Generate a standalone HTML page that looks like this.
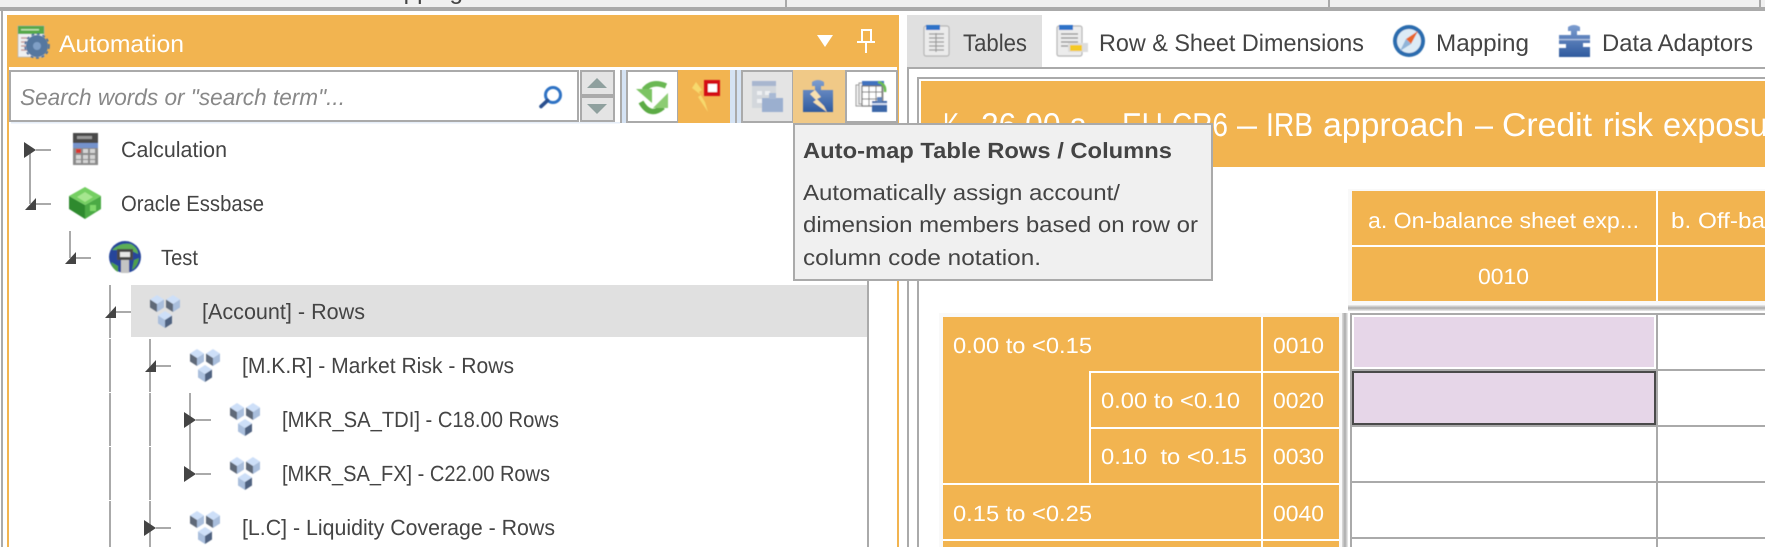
<!DOCTYPE html>
<html lang="en">
<head>
<meta charset="utf-8">
<title>Automation</title>
<style>
html,body{margin:0;padding:0;background:#fff;width:1765px;height:547px;overflow:hidden}
svg{display:block;position:absolute;left:0;top:0}
text{font-family:"Liberation Sans",sans-serif;text-rendering:geometricPrecision}
.t{font-size:22px;fill:#444}
.w{font-size:22px;fill:#fff}
.tab{font-size:24px;fill:#444}
.tip{font-size:22px;fill:#444}
.ttl{font-size:33px;fill:#fff}
</style>
</head>
<body>
<svg xmlns="http://www.w3.org/2000/svg" width="1765" height="547" viewBox="0 0 1765 547">
<defs>
<filter id="b" x="-20%" y="-20%" width="140%" height="140%"><feGaussianBlur stdDeviation="0.6"/></filter>
<linearGradient id="pz" x1="0" y1="0" x2="0" y2="1"><stop offset="0" stop-color="#7d9dd0"/><stop offset="1" stop-color="#2f5a9e"/></linearGradient>
<linearGradient id="sh" x1="0" y1="0" x2="1" y2="0"><stop offset="0" stop-color="#ddd"/><stop offset=".5" stop-color="#aaa"/><stop offset="1" stop-color="#eee"/></linearGradient>
<linearGradient id="shv" x1="0" y1="0" x2="0" y2="1"><stop offset="0" stop-color="#eee"/><stop offset=".5" stop-color="#aaa"/><stop offset="1" stop-color="#eee"/></linearGradient>
<g id="cube1">
<polygon points="0,4.5 7,0 14,4.5 7,9" fill="#cddff8"/>
<polygon points="0,4.5 7,9 7,17 0,12.5" fill="#5f6978"/>
<polygon points="14,4.5 7,9 7,17 14,12.5" fill="#a9bedc"/>
</g>
<g id="cube2">
<polygon points="0,4.5 7,0 14,4.5 7,9" fill="#cddff8"/>
<polygon points="0,4.5 7,9 7,17 0,12.5" fill="#a9bedc"/>
<polygon points="14,4.5 7,9 7,17 14,12.5" fill="#4f6280"/>
</g>
<g id="cubes" filter="url(#b)">
<use href="#cube1" x="0" y="0"/>
<use href="#cube1" x="16" y="0"/>
<use href="#cube2" x="8" y="16"/>
</g>
</defs>

<!-- top window strip -->
<rect x="0" y="0" width="1765" height="7" fill="#f0f0f0"/>
<rect x="0" y="7" width="1765" height="4" fill="#aaa"/>
<rect x="785" y="0" width="2" height="7" fill="#aaa"/>
<rect x="1328" y="0" width="2" height="7" fill="#aaa"/>
<rect x="1759" y="0" width="2" height="7" fill="#aaa"/>
<text class="tab" x="370" y="-1" textLength="93" lengthAdjust="spacingAndGlyphs">Mapping</text>

<!-- left panel frame -->
<rect x="1" y="11" width="2" height="536" fill="#aaa"/>
<rect x="7" y="15" width="2" height="532" fill="#f2b450"/>
<rect x="897" y="15" width="2" height="532" fill="#f2b450"/>
<rect x="7" y="15" width="892" height="52" fill="#f2b450"/>

<!-- header icon -->
<g filter="url(#b)">
<rect x="18" y="26" width="26" height="31" fill="#eef0f2" stroke="#b8b8b8" stroke-width=".8"/>
<rect x="18" y="26" width="26" height="8" fill="#55a848"/>
<rect x="21" y="29" width="18" height="1.5" fill="#bfe3b0"/>
<path d="M21 38h8M21 42h6M21 46h6M21 50h6" stroke="#c49a9a" stroke-width="1.5"/>
<circle cx="37" cy="46" r="11" fill="#55779f"/>
<circle cx="37" cy="46" r="12" fill="none" stroke="#4a6f9f" stroke-width="1.6" stroke-dasharray="3 2.6"/>
<circle cx="37" cy="46" r="4" fill="#7f9fc6"/>
</g>
<text x="59" y="52" font-size="24" fill="#fff" textLength="125" lengthAdjust="spacingAndGlyphs">Automation</text>
<polygon points="817,35 833,35 825,47" fill="#fff"/>
<!-- pin -->
<rect x="862" y="30" width="9" height="12" fill="none" stroke="#fff" stroke-width="2"/>
<rect x="857" y="41" width="18" height="2" fill="#fff"/>
<rect x="865" y="43" width="2" height="10" fill="#fff"/>

<!-- toolbar -->
<rect x="11" y="122" width="609" height="1.5" fill="#e6eef8"/>
<rect x="9" y="70" width="570" height="52" fill="#fff" stroke="none"/>
<path d="M10 71H578V121H10Z" fill="#fff" stroke="#aaa" stroke-width="2"/>
<text x="20" y="105" font-size="23" font-style="italic" fill="#888" textLength="325" lengthAdjust="spacingAndGlyphs">Search words or "search term"...</text>
<g filter="url(#b)">
<circle cx="553" cy="95" r="7.5" fill="none" stroke="#2f72c4" stroke-width="3"/>
<line x1="547.5" y1="100.5" x2="541" y2="106.5" stroke="#2b4f8e" stroke-width="3.6" stroke-linecap="round"/>
</g>
<rect x="581" y="71" width="33" height="24" fill="#e4e4e4" stroke="#aaa" stroke-width="2"/>
<rect x="581" y="97" width="33" height="24" fill="#e4e4e4" stroke="#aaa" stroke-width="2"/>
<polygon points="587,88 607,88 597,78" fill="#8fa09e"/>
<polygon points="587,104 607,104 597,114" fill="#8fa09e"/>

<rect x="620" y="70" width="2" height="53" fill="#aaa"/>
<rect x="622" y="70" width="4" height="53" fill="#d5e3f4"/>
<rect x="627" y="71" width="51" height="51" fill="#fff" stroke="#aaa" stroke-width="2"/>
<g filter="url(#b)">
<path d="M644 90Q652 80 666 86" fill="none" stroke="#6ab852" stroke-width="5.5"/>
<polygon points="636,89 652,89 652,103" fill="#7cc464"/>
<path d="M641 102Q650 118 663 107" fill="none" stroke="#5bab45" stroke-width="5.5"/>
<polygon points="668,108 653,108 668,93" fill="#8ccc72"/>
</g>

<rect x="678" y="70" width="52" height="53" fill="#f2b450"/>
<g filter="url(#b)">
<polygon points="696,82 702,90 699,92 705,102 708,112 698,97 701,95 692,88" fill="#f7dd70" opacity=".9"/>
<rect x="704" y="80" width="16" height="16" fill="#d40f14"/>
<rect x="708" y="84" width="9" height="8" fill="#fff"/>
</g>

<rect x="730" y="70" width="5" height="53" fill="#d5e3f4"/>
<rect x="735" y="70" width="2" height="53" fill="#aaa"/>
<rect x="737" y="70" width="4" height="53" fill="#d5e3f4"/>

<rect x="742" y="71" width="51" height="51" fill="#e4e4e4" stroke="#aaa" stroke-width="2"/>
<g filter="url(#b)">
<rect x="752" y="81" width="24" height="27" fill="#d3d7dc"/>
<rect x="752" y="81" width="24" height="5" fill="#a8b6cf"/>
<path d="M757 91h5v4h-5zM765 91h5v4h-5zM757 99h5v4h-5z" fill="#eef0f2"/>
<rect x="762" y="98" width="21" height="14" fill="#9bafcf"/>
<rect x="769" y="93" width="7" height="6" fill="#a8b9d4"/>
</g>

<rect x="793" y="70" width="52" height="53" fill="#f0c987"/>
<g filter="url(#b)">
<path d="M803 90H815V86H812V82Q818 78 824 82V86H821V90H833V112H803Z" fill="url(#pz)"/>
<polygon points="815,90 821,97 817,99 824,106 827,112 813,102 816,100 810,94" fill="#f7e0b0"/>
</g>

<rect x="846" y="71" width="51" height="51" fill="#fff" stroke="#aaa" stroke-width="2"/>
<g filter="url(#b)">
<rect x="856" y="85" width="24" height="21" fill="#f0f0f0" stroke="#999" stroke-width="1"/>
<rect x="859" y="83" width="24" height="21" fill="#f0f0f0" stroke="#999" stroke-width="1"/>
<rect x="862" y="81" width="22" height="5" fill="#3f72bf"/>
<rect x="862" y="86" width="20" height="20" fill="#fff" stroke="#777" stroke-width="1.2"/>
<path d="M862 92h20M862 99h20M869 86v20M876 86v20" stroke="#777" stroke-width="1"/>
<path d="M878 82Q886 84 885 92" fill="none" stroke="#6dbb52" stroke-width="2.6"/>
<rect x="872" y="101" width="15" height="11" fill="#3a66a8"/>
<rect x="872" y="103" width="15" height="2" fill="#cfdcf0"/>
<rect x="877" y="97" width="5" height="5" fill="#5f84bb"/>
</g>

<!-- tree selection -->
<rect x="131" y="285" width="736" height="52" fill="#e0e0e0"/>
<!-- right tree border -->
<rect x="867" y="123" width="2" height="424" fill="#aaa"/>

<!-- tree connector lines -->
<g fill="#aaa">
<rect x="36" y="149" width="15" height="2"/>
<rect x="29" y="150" width="2" height="54"/>
<rect x="34" y="203" width="17" height="2"/>
<rect x="69" y="231" width="2" height="27"/>
<rect x="74" y="257" width="17" height="2"/>
<rect x="109" y="285" width="2" height="53"/>
<rect x="109" y="339" width="2" height="53"/>
<rect x="109" y="393" width="2" height="53"/>
<rect x="109" y="447" width="2" height="53"/>
<rect x="109" y="501" width="2" height="46"/>
<rect x="114" y="311" width="17" height="2"/>
<rect x="149" y="339" width="2" height="53"/>
<rect x="149" y="393" width="2" height="53"/>
<rect x="149" y="447" width="2" height="53"/>
<rect x="149" y="501" width="2" height="46"/>
<rect x="154" y="365" width="17" height="2"/>
<rect x="189" y="393" width="2" height="81"/>
<rect x="196" y="419" width="15" height="2"/>
<rect x="196" y="473" width="15" height="2"/>
<rect x="156" y="527" width="15" height="2"/>
</g>
<g fill="#444">
<polygon points="24,142 36,150 24,158"/>
<polygon points="25,210 36,210 36,198"/>
<polygon points="65,264 76,264 76,252"/>
<polygon points="105,318 116,318 116,306"/>
<polygon points="145,372 156,372 156,360"/>
<polygon points="184,412 196,420 184,428"/>
<polygon points="184,466 196,474 184,482"/>
<polygon points="144,520 156,528 144,536"/>
</g>

<!-- tree icons -->
<g filter="url(#b)">
<rect x="73" y="133" width="25" height="32" fill="#8a8a8a"/>
<rect x="73" y="133" width="25" height="10" fill="#4a4a4a"/>
<rect x="77" y="136" width="15" height="3" fill="#999"/>
<rect x="73" y="143" width="25" height="5" fill="#7593cc"/>
<path d="M76 149h5v4h-5zM83 149h5v4h-5zM90 149h5v4h-5zM76 155h5v4h-5zM83 155h5v4h-5zM90 155h5v4h-5zM76 160h5v3h-5zM83 160h5v3h-5zM90 160h5v3h-5z" fill="#d4d4d4"/>
<rect x="76" y="149" width="5" height="4" fill="#d9342e"/>
</g>
<g filter="url(#b)">
<polygon points="85,187 101,196 85,205 69,196" fill="#74cf62"/>
<polygon points="69,196 85,205 85,219 69,209" fill="#2f8a2f"/>
<polygon points="101,196 85,205 85,219 101,209" fill="#4caa45"/>
<polygon points="85,192 93,197 85,202 77,197" fill="#a6e68f"/>
<rect x="90" y="205" width="6" height="6" fill="#7fd86a"/>
</g>
<g filter="url(#b)">
<circle cx="125" cy="257" r="16" fill="#26459a"/>
<path d="M112 250Q120 242 131 244Q138 248 138 254L130 250H118Z" fill="#5cae57"/>
<path d="M111 262L118 266V272Q112 269 111 262ZM134 260L139 258Q138 266 132 270Z" fill="#4f9f4c"/>
<rect x="117" y="249" width="16" height="11" fill="#4a4a4a"/>
<rect x="120" y="252" width="10" height="5" fill="#e8e8e8"/>
<rect x="121" y="260" width="8" height="13" fill="#c4c4c4"/>
</g>
<use href="#cubes" x="150" y="295"/>
<use href="#cubes" x="190" y="349"/>
<use href="#cubes" x="230" y="403"/>
<use href="#cubes" x="230" y="457"/>
<use href="#cubes" x="190" y="511"/>

<!-- tree labels -->
<text class="t" x="121" y="157" textLength="106" lengthAdjust="spacingAndGlyphs">Calculation</text>
<text class="t" x="121" y="211" textLength="143" lengthAdjust="spacingAndGlyphs">Oracle Essbase</text>
<text class="t" x="161" y="265" textLength="37" lengthAdjust="spacingAndGlyphs">Test</text>
<text class="t" x="202" y="319" textLength="163" lengthAdjust="spacingAndGlyphs">[Account] - Rows</text>
<text class="t" x="242" y="373" textLength="272" lengthAdjust="spacingAndGlyphs">[M.K.R] - Market Risk - Rows</text>
<text class="t" x="282" y="427" textLength="277" lengthAdjust="spacingAndGlyphs">[MKR_SA_TDI] - C18.00 Rows</text>
<text class="t" x="282" y="481" textLength="268" lengthAdjust="spacingAndGlyphs">[MKR_SA_FX] - C22.00 Rows</text>
<text class="t" x="242" y="535" textLength="313" lengthAdjust="spacingAndGlyphs">[L.C] - Liquidity Coverage - Rows</text>

<!-- right side tabs -->
<rect x="907" y="15" width="135" height="52" fill="#e0e0e0"/>
<g filter="url(#b)">
<rect x="924" y="26" width="25" height="30" rx="2" fill="#ebebeb" stroke="#b5b5b5" stroke-width="1.2"/>
<rect x="926" y="25" width="14" height="5" fill="#2d72c8"/>
<path d="M929 34h15M929 38h15M929 42h15M929 46h15M929 50h15M936 33v19" stroke="#9a9a9a" stroke-width="1.2"/>
</g>
<text class="tab" x="963" y="51" textLength="64" lengthAdjust="spacingAndGlyphs">Tables</text>
<g filter="url(#b)">
<rect x="1057" y="26" width="25" height="30" rx="2" fill="#ececec" stroke="#b5b5b5" stroke-width="1.2"/>
<rect x="1059" y="25" width="14" height="5" fill="#2d72c8"/>
<path d="M1061 34h17M1061 38h17M1061 42h17M1061 46h8" stroke="#8c8c8c" stroke-width="1.2"/>
<rect x="1068" y="43" width="20" height="9" fill="#ddd"/>
<rect x="1070" y="45" width="12" height="6" fill="#f4c928"/>
</g>
<text class="tab" x="1099" y="51" textLength="265" lengthAdjust="spacingAndGlyphs">Row &amp; Sheet Dimensions</text>
<g filter="url(#b)">
<circle cx="1409" cy="41" r="16" fill="#2c6cae"/>
<circle cx="1409" cy="41" r="12" fill="#dcebf6"/>
<polygon points="1418,31 1406,39 1411,44" fill="#e8662a"/>
<polygon points="1400,51 1406,39 1411,44" fill="#8fb4d8"/>
</g>
<text class="tab" x="1436" y="51" textLength="93" lengthAdjust="spacingAndGlyphs">Mapping</text>
<g filter="url(#b)">
<path d="M1559 35H1571V31H1568V27Q1574 23 1580 27V31H1577V35H1590V43H1583V47H1590V57H1559V48H1566V44H1559Z" fill="url(#pz)"/>
<rect x="1559" y="39" width="31" height="1.2" fill="#b7c9e6"/>
</g>
<text class="tab" x="1602" y="51" textLength="151" lengthAdjust="spacingAndGlyphs">Data Adaptors</text>

<!-- right content frames -->
<rect x="907" y="67" width="858" height="2" fill="#aaa"/>
<rect x="907" y="67" width="2" height="480" fill="#aaa"/>
<rect x="917" y="77" width="848" height="2" fill="#aaa"/>
<rect x="917" y="77" width="2" height="470" fill="#aaa"/>
<rect x="921" y="81" width="844" height="86" fill="#f2b450"/>
<text class="ttl" x="943" y="136" textLength="16" lengthAdjust="spacingAndGlyphs">K</text>
<text class="ttl" x="981" y="136" textLength="106" lengthAdjust="spacingAndGlyphs">26.00.a</text>
<text class="ttl" x="1122" y="136" textLength="41" lengthAdjust="spacingAndGlyphs">EU</text>
<text class="ttl" x="1172" y="136" textLength="56" lengthAdjust="spacingAndGlyphs">CR6</text>
<text class="ttl" x="1237" y="136" textLength="20" lengthAdjust="spacingAndGlyphs">–</text>
<text class="ttl" x="1266" y="136" textLength="47" lengthAdjust="spacingAndGlyphs">IRB</text>
<text class="ttl" x="1323" y="136" textLength="141" lengthAdjust="spacingAndGlyphs">approach</text>
<text class="ttl" x="1475" y="136" textLength="18" lengthAdjust="spacingAndGlyphs">–</text>
<text class="ttl" x="1502" y="136" textLength="90" lengthAdjust="spacingAndGlyphs">Credit</text>
<text class="ttl" x="1603" y="136" textLength="50" lengthAdjust="spacingAndGlyphs">risk</text>
<text class="ttl" x="1663" y="136" textLength="150" lengthAdjust="spacingAndGlyphs">exposures</text>

<!-- column headers -->
<rect x="1348" y="189" width="417" height="116" fill="#f9f9f9"/>
<rect x="1352" y="191" width="413" height="110" fill="#f2b450"/>
<rect x="1352" y="245" width="413" height="2" fill="#fff"/>
<rect x="1656" y="191" width="2" height="110" fill="#fff"/>
<rect x="1348" y="305" width="417" height="6" fill="url(#shv)"/>
<text class="w" x="1368" y="228" textLength="271" lengthAdjust="spacingAndGlyphs">a. On-balance sheet exp...</text>
<text class="w" x="1671" y="228" textLength="94" lengthAdjust="spacingAndGlyphs">b. Off-ba</text>
<text class="w" x="1478" y="284" textLength="51" lengthAdjust="spacingAndGlyphs">0010</text>

<!-- row headers -->
<rect x="939" y="313" width="403" height="234" fill="#f9f9f9"/>
<rect x="943" y="317" width="396" height="230" fill="#f2b450"/>
<g fill="#fff">
<rect x="1261" y="317" width="2" height="230"/>
<rect x="1089" y="371" width="250" height="2"/>
<rect x="1089" y="371" width="2" height="112"/>
<rect x="1089" y="427" width="250" height="2"/>
<rect x="943" y="483" width="396" height="2"/>
<rect x="943" y="539" width="396" height="2"/>
</g>
<rect x="1342" y="313" width="6" height="234" fill="url(#sh)"/>
<text class="w" x="953" y="353" textLength="139" lengthAdjust="spacingAndGlyphs">0.00 to &lt;0.15</text>
<text class="w" x="1273" y="353" textLength="51" lengthAdjust="spacingAndGlyphs">0010</text>
<text class="w" x="1101" y="408" textLength="139" lengthAdjust="spacingAndGlyphs">0.00 to &lt;0.10</text>
<text class="w" x="1273" y="408" textLength="51" lengthAdjust="spacingAndGlyphs">0020</text>
<text class="w" x="1101" y="464" textLength="146" lengthAdjust="spacingAndGlyphs">0.10&#160; to &lt;0.15</text>
<text class="w" x="1273" y="464" textLength="51" lengthAdjust="spacingAndGlyphs">0030</text>
<text class="w" x="953" y="521" textLength="139" lengthAdjust="spacingAndGlyphs">0.15 to &lt;0.25</text>
<text class="w" x="1273" y="521" textLength="51" lengthAdjust="spacingAndGlyphs">0040</text>

<!-- data grid -->
<g fill="#aaa">
<rect x="1350" y="313" width="2" height="234"/>
<rect x="1656" y="313" width="2" height="234"/>
<rect x="1350" y="313" width="415" height="2"/>
<rect x="1350" y="369" width="415" height="2"/>
<rect x="1350" y="425" width="415" height="2"/>
<rect x="1350" y="481" width="415" height="2"/>
<rect x="1350" y="537" width="415" height="2"/>
</g>
<rect x="1354" y="317" width="300" height="50" fill="#e6d6e8"/>
<rect x="1353" y="372" width="302" height="52" fill="#e6d6e8" stroke="#4a4a4a" stroke-width="2"/>

<!-- tooltip -->
<rect x="794" y="124" width="418" height="156" fill="#f0f0f0" stroke="#aaa" stroke-width="2"/>
<text x="803" y="158" font-size="22" font-weight="bold" fill="#444" textLength="369" lengthAdjust="spacingAndGlyphs">Auto-map Table Rows / Columns</text>
<text class="tip" x="803" y="200" textLength="317" lengthAdjust="spacingAndGlyphs">Automatically assign account/</text>
<text class="tip" x="803" y="232" textLength="395" lengthAdjust="spacingAndGlyphs">dimension members based on row or</text>
<text class="tip" x="803" y="265" textLength="238" lengthAdjust="spacingAndGlyphs">column code notation.</text>
</svg>
</body>
</html>
